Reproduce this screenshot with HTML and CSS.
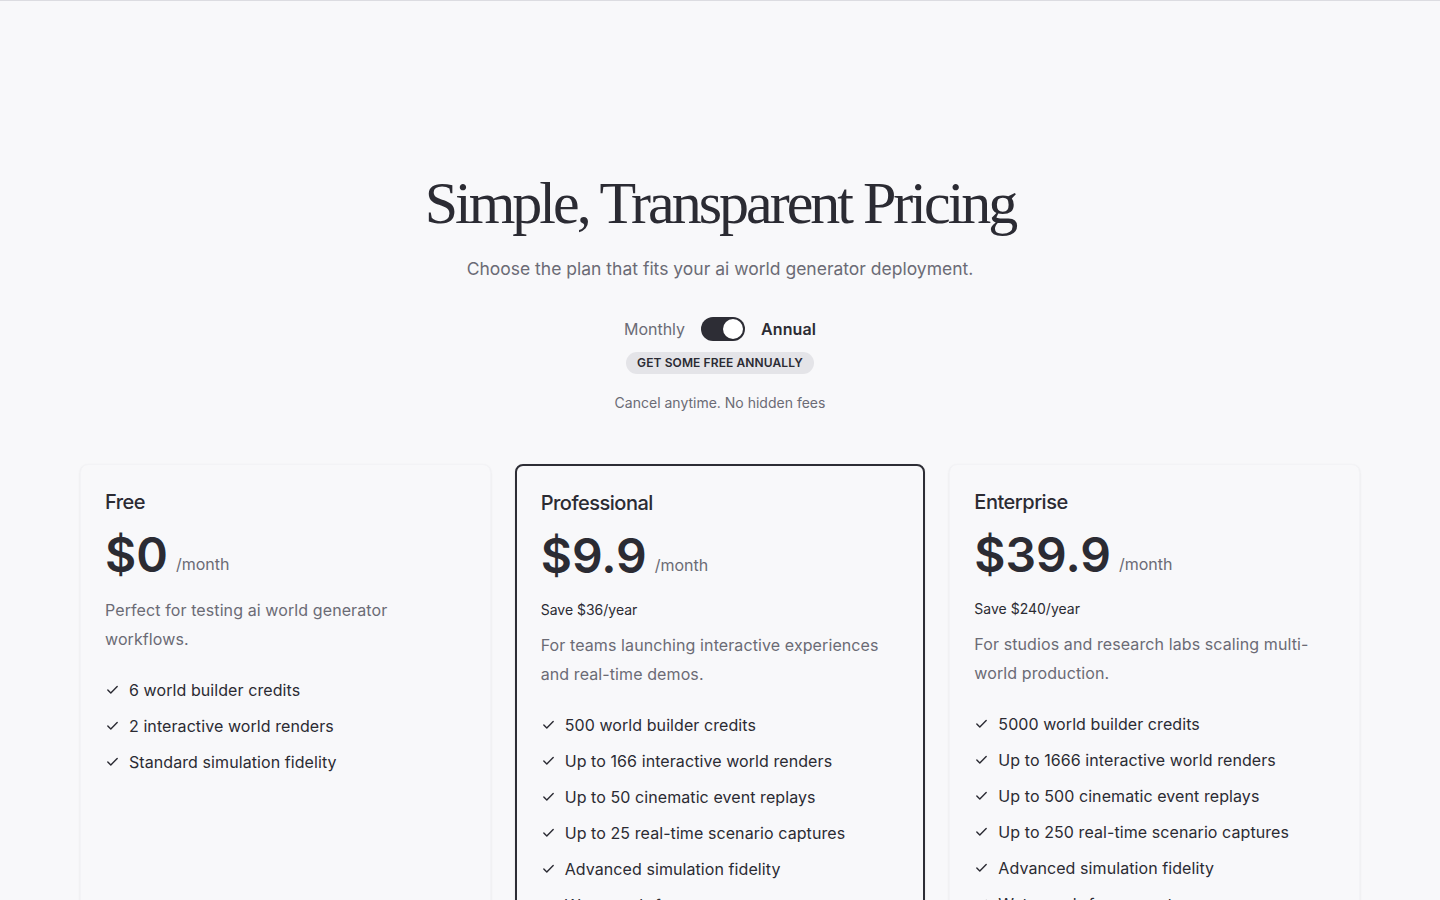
FILE: index.html
```html
<!DOCTYPE html>
<html lang="en">
<head>
<meta charset="utf-8">
<title>Pricing</title>
<link rel="stylesheet" href="styles.css">
</head>
<body>
<div class="topbar"></div>
<main class="pricing">
  <header class="intro">
    <h1 class="title">Simple, Transparent Pricing</h1>
    <p class="subtitle">Choose the plan that fits your ai world generator deployment.</p>
    <div class="billing">
      <span class="billing-label">Monthly</span>
      <span class="switch"><span class="knob"></span></span>
      <span class="billing-label active">Annual</span>
    </div>
    <span class="badge">GET SOME FREE ANNUALLY</span>
    <p class="note">Cancel anytime. No hidden fees</p>
  </header>

  <section class="plans">
    <article class="plan">
      <h2 class="plan-name">Free</h2>
      <div class="price"><span class="amount">$0</span><span class="period">/month</span></div>
      <p class="desc">Perfect for testing ai world generator workflows.</p>
      <ul class="features">
        <li><svg class="check" viewBox="0 0 16 16"><path d="M3 8.5l3.2 3.2L13 4.8"/></svg>6 world builder credits</li>
        <li><svg class="check" viewBox="0 0 16 16"><path d="M3 8.5l3.2 3.2L13 4.8"/></svg>2 interactive world renders</li>
        <li><svg class="check" viewBox="0 0 16 16"><path d="M3 8.5l3.2 3.2L13 4.8"/></svg>Standard simulation fidelity</li>
      </ul>
    </article>

    <article class="plan featured">
      <h2 class="plan-name">Professional</h2>
      <div class="price"><span class="amount">$9.9</span><span class="period">/month</span></div>
      <p class="save">Save $36/year</p>
      <p class="desc">For teams launching interactive experiences and real-time demos.</p>
      <ul class="features">
        <li><svg class="check" viewBox="0 0 16 16"><path d="M3 8.5l3.2 3.2L13 4.8"/></svg>500 world builder credits</li>
        <li><svg class="check" viewBox="0 0 16 16"><path d="M3 8.5l3.2 3.2L13 4.8"/></svg>Up to 166 interactive world renders</li>
        <li><svg class="check" viewBox="0 0 16 16"><path d="M3 8.5l3.2 3.2L13 4.8"/></svg>Up to 50 cinematic event replays</li>
        <li><svg class="check" viewBox="0 0 16 16"><path d="M3 8.5l3.2 3.2L13 4.8"/></svg>Up to 25 real-time scenario captures</li>
        <li><svg class="check" viewBox="0 0 16 16"><path d="M3 8.5l3.2 3.2L13 4.8"/></svg>Advanced simulation fidelity</li>
        <li><svg class="check" viewBox="0 0 16 16"><path d="M3 8.5l3.2 3.2L13 4.8"/></svg>Watermark-free exports</li>
      </ul>
    </article>

    <article class="plan">
      <h2 class="plan-name">Enterprise</h2>
      <div class="price"><span class="amount">$39.9</span><span class="period">/month</span></div>
      <p class="save">Save $240/year</p>
      <p class="desc">For studios and research labs scaling multi-world production.</p>
      <ul class="features">
        <li><svg class="check" viewBox="0 0 16 16"><path d="M3 8.5l3.2 3.2L13 4.8"/></svg>5000 world builder credits</li>
        <li><svg class="check" viewBox="0 0 16 16"><path d="M3 8.5l3.2 3.2L13 4.8"/></svg>Up to 1666 interactive world renders</li>
        <li><svg class="check" viewBox="0 0 16 16"><path d="M3 8.5l3.2 3.2L13 4.8"/></svg>Up to 500 cinematic event replays</li>
        <li><svg class="check" viewBox="0 0 16 16"><path d="M3 8.5l3.2 3.2L13 4.8"/></svg>Up to 250 real-time scenario captures</li>
        <li><svg class="check" viewBox="0 0 16 16"><path d="M3 8.5l3.2 3.2L13 4.8"/></svg>Advanced simulation fidelity</li>
        <li><svg class="check" viewBox="0 0 16 16"><path d="M3 8.5l3.2 3.2L13 4.8"/></svg>Watermark-free exports</li>
      </ul>
    </article>
  </section>
</main>
</body>
</html>
```

FILE: styles.css
```css
* { box-sizing: border-box; }
html, body { margin: 0; padding: 0; }
body {
  background: #f8f8fa;
  color: #2b2b33;
  font-family: Inter, "Noto Sans", sans-serif;
  overflow: hidden;
}
.topbar {
  height: 1px;
  background: #dcdce1;
}
.pricing {
  padding: 169px 80px 0;
}
.intro {
  display: flex;
  flex-direction: column;
  align-items: center;
  text-align: center;
}
.title {
  margin: 0;
  font-family: "Liberation Serif", "Times New Roman", serif;
  font-weight: 400;
  font-size: 60px;
  line-height: 66px;
  letter-spacing: -3px;
  color: #2b2b33;
}
.subtitle {
  margin: 19px 0 0;
  font-size: 17.5px;
  line-height: 28px;
  color: #6b6b75;
}
.billing {
  margin-top: 34px;
  display: flex;
  align-items: center;
  gap: 16px;
  height: 24px;
}
.billing-label {
  font-size: 16px;
  line-height: 24px;
  color: #6b6b75;
}
.billing-label.active {
  color: #2b2b33;
  font-weight: 600;
  letter-spacing: 0.1px;
}
.switch {
  width: 44px;
  height: 24px;
  border-radius: 12px;
  background: #2d2d35;
  display: flex;
  align-items: center;
  justify-content: flex-end;
  padding: 2px;
}
.knob {
  width: 20px;
  height: 20px;
  border-radius: 50%;
  background: #fff;
  box-shadow: 0 1px 2px rgba(0,0,0,0.15);
}
.badge {
  margin-top: 11px;
  display: inline-block;
  background: #e4e4e8;
  color: #2b2b33;
  font-size: 12px;
  font-weight: 600;
  line-height: 22px;
  padding: 0 11px;
  border-radius: 11px;
  letter-spacing: 0.1px;
}
.note {
  margin: 19px 0 0;
  font-size: 14px;
  line-height: 20px;
  color: #6b6b75;
}
.plans {
  margin-top: 51px;
  display: grid;
  grid-template-columns: repeat(3, 1fr);
  gap: 24px;
  align-items: start;
}
.plan {
  background: #f8f8fa;
  border: 1px solid #f3f3f6;
  border-radius: 8px;
  padding: 24px 24px 40px;
  min-height: 600px;
  box-shadow: 0 1px 3px rgba(20,20,40,0.06), 0 1px 2px rgba(20,20,40,0.03);
}
.plan.featured {
  border: 2px solid #2d2d35;
  padding: 24px 24px 40px;
}
.plan-name {
  margin: 0;
  font-size: 20px;
  font-weight: 500;
  line-height: 26px;
  letter-spacing: -0.5px;
  color: #2b2b33;
}
.price {
  margin-top: 16px;
  display: flex;
  align-items: flex-end;
  gap: 8px;
}
.amount {
  font-size: 48px;
  font-weight: 600;
  line-height: 48px;
  color: #2b2b33;
}
.period {
  font-size: 16px;
  line-height: 24px;
  margin-bottom: 3px;
  color: #6b6b75;
}
.save {
  margin: 20px 0 0;
  font-size: 14px;
  line-height: 20px;
  color: #2b2b33;
}
.desc {
  margin: 17px 0 0;
  font-size: 16px;
  line-height: 28.8px;
  letter-spacing: 0.1px;
  color: #6b6b75;
  max-width: 330px;
}
.save + .desc { margin-top: 11px; max-width: 345px; }
.features {
  list-style: none;
  margin: 24px 0 0;
  padding: 0;
  display: flex;
  flex-direction: column;
  gap: 12px;
}
.features li {
  display: flex;
  align-items: center;
  gap: 9px;
  font-size: 16px;
  line-height: 24px;
  letter-spacing: 0.08px;
  color: #2b2b33;
}
.check {
  width: 15px;
  height: 15px;
  flex: none;
  fill: none;
  stroke: #2b2b33;
  stroke-width: 1.5;
  stroke-linecap: round;
  stroke-linejoin: round;
}
```
